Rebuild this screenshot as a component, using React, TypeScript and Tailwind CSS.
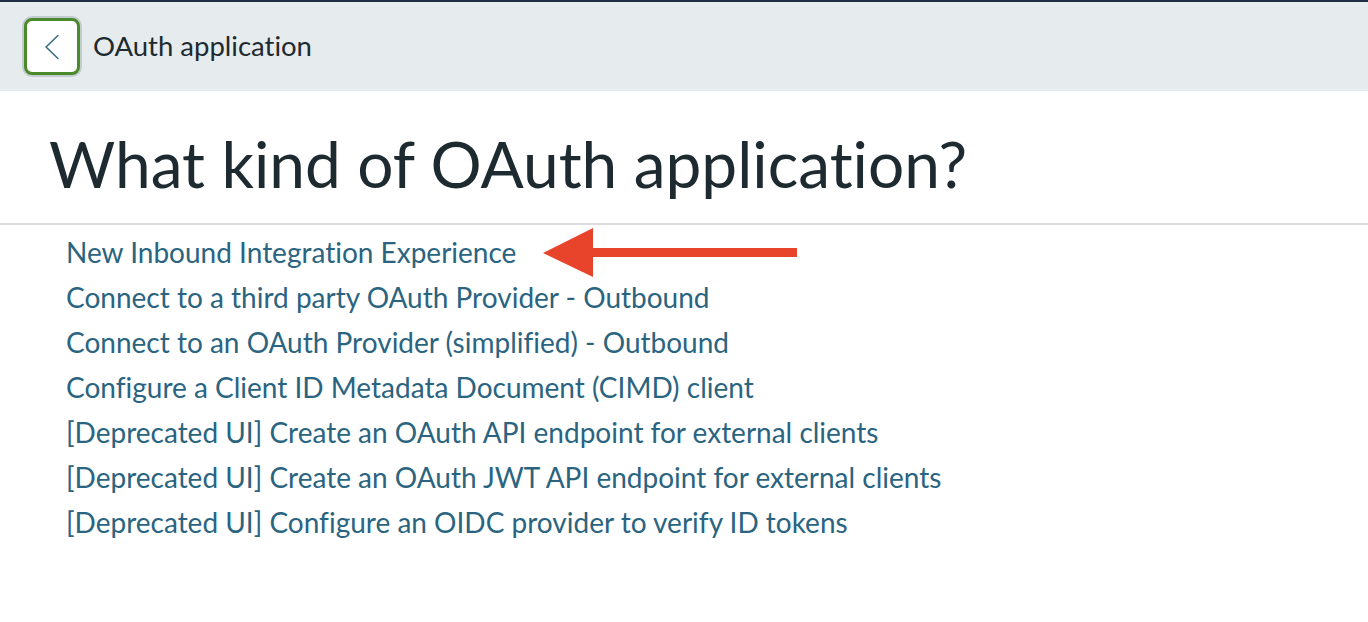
import React from 'react';

const links = [
  'New Inbound Integration Experience',
  'Connect to a third party OAuth Provider - Outbound',
  'Connect to an OAuth Provider (simplified) - Outbound',
  'Configure a Client ID Metadata Document (CIMD) client',
  '[Deprecated UI] Create an OAuth API endpoint for external clients',
  '[Deprecated UI] Create an OAuth JWT API endpoint for external clients',
  '[Deprecated UI] Configure an OIDC provider to verify ID tokens',
];

export default function App() {
  return (
    <div className="min-h-screen bg-white font-['Lato','Noto_Sans',sans-serif] [font-variant-ligatures:none]">
      {/* Header */}
      <header className="h-[91px] border-t-2 border-[#1c2e40] bg-[#e6ebee] flex items-center pl-6 gap-[13px]">
        <button className="w-[56px] h-[57px] rounded-[8px] bg-white border-[3px] border-[#4a8a2a] shadow-[0_0_0_2px_#c3ccd1] flex items-center justify-center">
          <svg width="16" height="26" viewBox="0 0 16 26" fill="none">
            <path d="M14 1.5 L2 13 L14 24.5" stroke="#3a6c85" strokeWidth="1.6" strokeLinecap="round" strokeLinejoin="round" />
          </svg>
        </button>
        <h2 className="text-[27.5px] text-[#1d2a30] leading-none pb-[2px]">OAuth application</h2>
      </header>

      {/* Title */}
      <div className="border-b-2 border-[#dddddd] pl-[49px] pt-[34px] pb-[20px]">
        <h1 className="text-[64px] leading-[78px] text-[#1d2a30]">What kind of OAuth application?</h1>
      </div>

      {/* Options */}
      <ul className="pl-[66px] pt-[4px]">
        {links.map((l, i) => (
          <li key={l} className="flex items-center h-[45px]">
            <a href="#" className="text-[28px] text-[#2a6480] leading-none">{l}</a>
            {i === 0 && (
              <svg className="ml-[27px]" width="256" height="50" viewBox="0 0 256 50">
                <polygon points="0,26 50,1 50,50" fill="#e8432b" />
                <rect x="46" y="21" width="208" height="9" fill="#e8432b" />
              </svg>
            )}
          </li>
        ))}
      </ul>
    </div>
  );
}
